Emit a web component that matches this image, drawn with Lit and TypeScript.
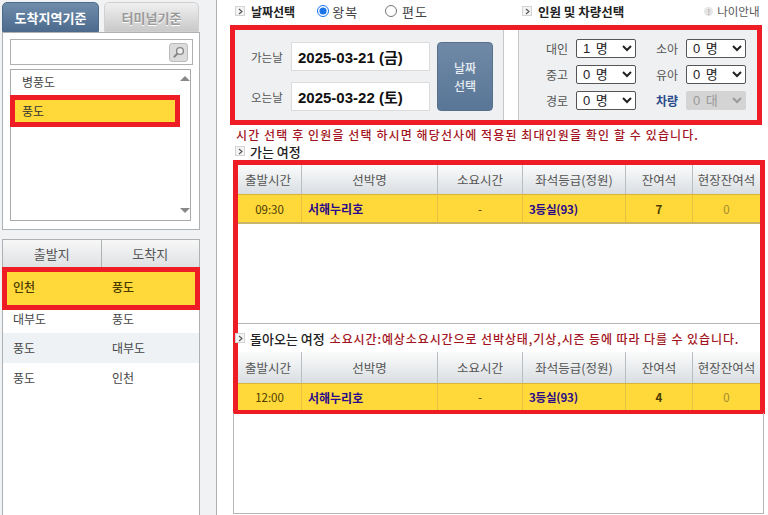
import { LitElement, html, css } from "lit";
import { customElement } from "lit/decorators.js";

const chev = html`<span class="chev"><svg width="7" height="7" viewBox="0 0 7 7"><path d="M2 1l3 2.5L2 6" fill="none" stroke="#555" stroke-width="1.1"/></svg></span>`;

const tableBlock = (time: string, left: string) => html`
  <div class="thead">
    <div class="c c1">출발시간</div><div class="c c2">선박명</div><div class="c c3">소요시간</div>
    <div class="c c4">좌석등급(정원)</div><div class="c c5">잔여석</div><div class="c c6">현장잔여석</div>
  </div>
  <div class="trow">
    <div class="c c1">${time}</div><div class="c c2 ship">서해누리호</div><div class="c c3">-</div>
    <div class="c c4 ship grade">3등실(93)</div><div class="c c5 left">${left}</div><div class="c c6 site">0</div>
  </div>`;

const sel = (v: string, disabled = false) => html`<select ?disabled=${disabled} class=${disabled ? "off" : ""}><option>${v}</option></select>`;

@customElement("app-root")
export class AppRoot extends LitElement {
  static styles = css`
    :host { display: block; width: 768px; height: 515px; overflow: hidden; background: #fff; color: #333;
      font-family: "Noto Sans CJK KR", "Liberation Sans", sans-serif; font-size: 12px; }
    * { box-sizing: border-box; }
    .page { display: flex; height: 515px; }

    .side { width: 217px; height: 515px; flex: none; background: #f0f2f4; border-right: 1px solid #aeb1b4; padding: 2px 0 0 2px; }
    .tabs { display: flex; gap: 5px; height: 30px; }
    .tab { display: flex; align-items: center; justify-content: center; font-size: 13px; font-weight: 700; border-radius: 5px 5px 0 0; }
    .tab.on { width: 97px; color: #fff; background: linear-gradient(#6f8cab, #4d6b8e); border: 1px solid #4f6a89; }
    .tab.off { width: 95px; color: #9a9a9a; background: linear-gradient(#f0f0f0, #c9c9c9); border: 1px solid #d0d0d0; text-shadow: 0 1px 0 #fff; }
    .area { width: 198px; height: 198px; background: #fff; border: 1px solid #aeb1b4; padding: 6px 0 0 7px; }
    .search { width: 183px; height: 26px; border: 1px solid #b0b0b0; display: flex; align-items: center; justify-content: flex-end; padding-right: 4px; }
    .sbtn { width: 19px; height: 19px; border: 1px solid #bbb; border-radius: 3px; background: #dcdcdc; display: flex; align-items: center; justify-content: center; }
    .list { margin-top: 4px; width: 181px; height: 152px; border: 1px solid #aaa; display: flex; }
    .items { width: 170px; margin-left: -1px; }
    .li { height: 25px; padding: 0 0 2px 12px; display: flex; align-items: center; color: #444; }
    .li.sel { height: 32px; border: 5px solid #ee1c25; background: #ffd83a; color: #333; padding: 0 0 2px 7px; }
    .scroll { flex: 1; display: flex; flex-direction: column; justify-content: space-between; align-items: center; padding: 6px 0 7px; }
    .up { width: 0; height: 0; border: 5px solid transparent; border-top: 0; border-bottom: 5px solid #888; }
    .down { width: 0; height: 0; border: 5px solid transparent; border-bottom: 0; border-top: 5px solid #888; }

    .routes { margin-top: 9px; width: 198px; height: 280px; background: #fff; border: 1px solid #aeb1b4; }
    .rhead { display: flex; height: 27px; background: linear-gradient(#f7f7f7, #dfe1e3); font-size: 13px; color: #555; }
    .rhead div { flex: 1; display: flex; align-items: center; justify-content: center; }
    .rhead div + div { border-left: 1px solid #aeb1b4; }
    .r { height: 30px; display: flex; align-items: center; padding: 0 0 2px 10px; color: #444; }
    .r span { width: 99px; flex: none; }
    .r.band { background: #eef2f5; }
    .r.first { height: 23px; padding-bottom: 7px; }
    .r.sel { height: 43px; margin: 0 -1px; border: 5px solid #ee1c25; background: #ffd83a; padding: 0 0 4px 6px; font-weight: 500; color: #4a3a00; }

    .main { flex: 1; padding-left: 13px; min-width: 0; }
    .top { height: 25px; display: flex; align-items: center; padding: 0 0 3px 5px; font-size: 12px; color: #222; }
    .chev { width: 10px; height: 10px; flex: none; border: 1px solid #d4d4d4; background: #f4f4f4; display: inline-flex; align-items: center; justify-content: center; }
    .ttl { font-weight: 700; margin-left: 6px; }
    .people .ttl { font-size: 12.5px; }
    .radio { display: flex; align-items: center; font-size: 13px; color: #444; letter-spacing: 1px; }
    .radio input { width: 12px; height: 12px; margin: 0 5px 0 0; accent-color: #1a73e8; }
    .r1 { margin-left: 22px; }
    .r1 input { margin-right: 3px; }
    .r2 { margin-left: 27px; }
    .people { margin-left: 94px; display: flex; align-items: center; }
    .info { margin-left: 80px; display: flex; align-items: center; gap: 4px; font-size: 11.5px; color: #555; }
    .bang { width: 9px; height: 9px; border-radius: 50%; background: #e5e5e5; color: #999; font-size: 8px; line-height: 9px; text-align: center; }

    .select { width: 532px; height: 100px; border: 5px solid #ee1c25; background: #eef0f1; display: flex; }
    .dates { width: 268px; padding: 12px 0 0 16px; display: grid; grid-template-columns: 40px 139px 56px; grid-template-rows: 29px 29px; row-gap: 11px; }
    .dlabel { font-size: 11.5px; color: #555; display: flex; align-items: center; }
    .dval { background: #fff; border: 1px solid #dcdcdc; font: 700 15px "Liberation Sans", "Noto Sans CJK KR", sans-serif; color: #111; display: flex; align-items: center; padding-left: 6px; }
    .dbtn { grid-column: 3; grid-row: 1 / span 2; margin-left: 7px; width: 56px; border-radius: 4px; background: linear-gradient(#6f89a7, #5a7696); border: 1px solid #58708c; color: #e8eef4; font-size: 12px; font-weight: 500; line-height: 18px; display: flex; align-items: center; justify-content: center; text-align: center; }
    .gap { width: 16px; background: #fff; border-left: 1px solid #c8c8c8; border-right: 1px solid #c8c8c8; }
    .pax { flex: 1; padding: 9px 0 0 27px; display: grid; grid-template-columns: 30px 60px 20px 30px 60px; grid-auto-rows: 19px; row-gap: 7px; }
    .pl { font-size: 12px; color: #555; display: flex; align-items: center; }
    .pl.car { color: #2b4a8b; font-weight: 700; }
    select { width: 60px; height: 19px; font: 400 13px/17px "Liberation Sans", "Noto Sans CJK KR", sans-serif; letter-spacing: 1px; padding: 0 0 0 2px; margin: 0; background: #fff; color: #222; border: 1px solid #555; border-radius: 2px; }
    select.off { background: #d4d4d4; border-color: #d4d4d4; color: #999; opacity: 1; }

    .notice { height: 17px; padding: 3px 0 0 6px; font-size: 12px; line-height: 14px; font-weight: 500; color: #a31422; letter-spacing: 1.1px; white-space: nowrap; }
    .sub { height: 18px; display: flex; align-items: center; padding-left: 5px; font-size: 13px; color: #222; font-weight: 500; }
    .sub .chev { margin-right: 5px; }
    .trips { margin-left: 3px; width: 532px; height: 254px; border: 5px solid #ee1c25; margin-bottom: -1px; }
    .thead, .trow { display: flex; }
    .thead { height: 29px; background: linear-gradient(#fbfbfb, #d9dee2); font-size: 12.5px; color: #555; }
    .thead .c1 { padding-right: 3px; }
    .trow { height: 30px; background: #ffd83a; border-top: 1px solid #d8b53a; border-bottom: 2px solid #c9b56a; font-size: 11.5px; color: #4a3a00; }
    .c { display: flex; align-items: center; justify-content: center; white-space: nowrap; }
    .c + .c { border-left: 1px solid #b8bdc1; }
    .trow .c + .c { border-left-color: #e6c243; }
    .c1 { width: 63px; } .c2 { width: 136px; } .c3 { width: 85px; } .c4 { width: 103px; } .c5 { width: 67px; } .c6 { flex: 1; }
    .ship { justify-content: flex-start; padding-left: 6px; color: #2a0a8a; font-weight: 700; font-size: 12px; }
    .grade { letter-spacing: -.2px; font-size: 11.5px; }
    .left { font-weight: 700; } .site { color: #a08a30; }
    .spacer { height: 100px; border-bottom: 1px solid #b5b5b5; }
    .back { height: 28px; display: flex; align-items: center; font-size: 13px; font-weight: 500; color: #222; margin-left: -3px; }
    .back .chev { margin-right: 5px; }
    .warn { margin-left: 5px; font-size: 12px; color: #a31422; letter-spacing: .9px; white-space: nowrap; }
    .trip2 .trow { height: 27px; border-bottom: 0; }
    .trip2 .thead { height: 31px; }
    .below { margin-left: 3px; width: 531px; height: 101px; border: 1px solid #b5b5b5; border-top: 0; }
  `;

  render() {
    return html`<div class="page">
      <aside class="side">
        <div class="tabs"><div class="tab on">도착지역기준</div><div class="tab off">터미널기준</div></div>
        <div class="area">
          <div class="search"><div class="sbtn"><svg width="13" height="13" viewBox="0 0 13 13"><circle cx="8" cy="5" r="3.4" fill="#eee" stroke="#888" stroke-width="1.4"/><path d="M5.5 7.5L1.8 11.2" stroke="#888" stroke-width="2"/></svg></div></div>
          <div class="list">
            <div class="items"><div class="li">병풍도</div><div class="li sel">풍도</div></div>
            <div class="scroll"><div class="up"></div><div class="down"></div></div>
          </div>
        </div>
        <div class="routes">
          <div class="rhead"><div>출발지</div><div>도착지</div></div>
          <div class="r sel"><span>인천</span><span>풍도</span></div>
          <div class="r first"><span>대부도</span><span>풍도</span></div>
          <div class="r band"><span>풍도</span><span>대부도</span></div>
          <div class="r"><span>풍도</span><span>인천</span></div>
        </div>
      </aside>
      <main class="main">
        <div class="top">
          ${chev}<span class="ttl">날짜선택</span>
          <label class="radio r1"><input type="radio" name="w" checked />왕복</label>
          <label class="radio r2"><input type="radio" name="w" />편도</label>
          <span class="people">${chev}<span class="ttl">인원 및 차량선택</span></span>
          <span class="info"><span class="bang">!</span>나이안내</span>
        </div>
        <section class="select">
          <div class="dates">
            <div class="dlabel">가는날</div><div class="dval">2025-03-21 (금)</div>
            <div class="dbtn">날짜<br />선택</div>
            <div class="dlabel">오는날</div><div class="dval">2025-03-22 (토)</div>
          </div>
          <div class="gap"></div>
          <div class="pax">
            <div class="pl">대인</div>${sel("1 명")}<div></div><div class="pl">소아</div>${sel("0 명")}
            <div class="pl">중고</div>${sel("0 명")}<div></div><div class="pl">유아</div>${sel("0 명")}
            <div class="pl">경로</div>${sel("0 명")}<div></div><div class="pl car">차량</div>${sel("0 대", true)}
          </div>
        </section>
        <div class="notice">시간 선택 후 인원을 선택 하시면 해당선사에 적용된 최대인원을 확인 할 수 있습니다.</div>
        <div class="sub">${chev}가는 여정</div>
        <section class="trips">
          ${tableBlock("09:30", "7")}
          <div class="spacer"></div>
          <div class="back">${chev}돌아오는 여정<span class="warn">소요시간:예상소요시간으로 선박상태,기상,시즌 등에 따라 다를 수 있습니다.</span></div>
          <div class="trip2">${tableBlock("12:00", "4")}</div>
        </section>
        <div class="below"></div>
      </main>
    </div>`;
  }
}
